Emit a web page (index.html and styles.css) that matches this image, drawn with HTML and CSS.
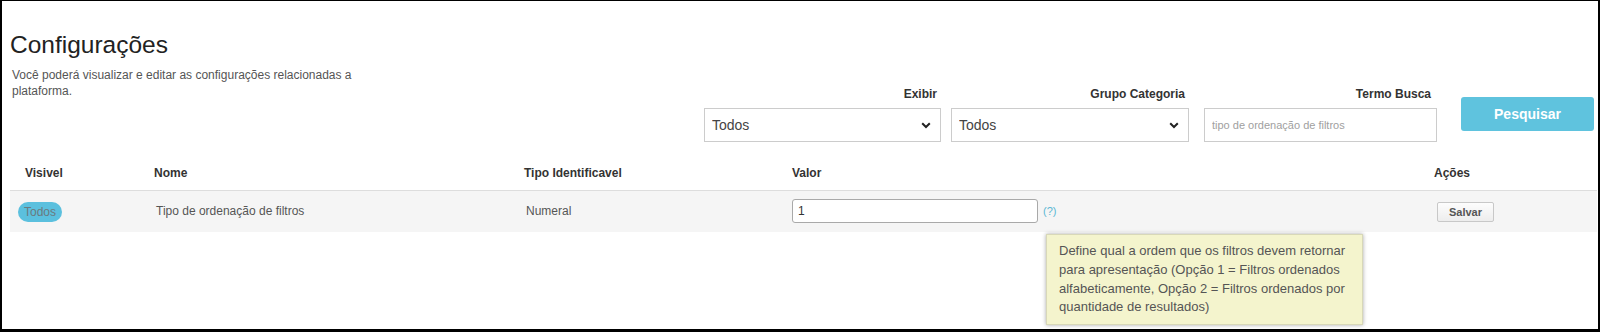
FILE: index.html
```html
<!DOCTYPE html>
<html lang="pt">
<head>
<meta charset="utf-8">
<title>Configurações</title>
<link rel="stylesheet" href="styles.css">
</head>
<body>
<div class="frame">
  <h1 class="title">Configurações</h1>
  <div class="toolbar">
    <p class="desc">Você poderá visualizar e editar as configurações relacionadas a plataforma.</p>
    <div class="filters">
      <div class="group g1">
        <label class="flabel">Exibir</label>
        <div class="select-wrap">
          <select class="select"><option>Todos</option></select>
          <svg class="chev" width="10" height="7" viewBox="0 0 10 7"><path d="M1.2 1.2 L5 5 L8.8 1.2" fill="none" stroke="#222" stroke-width="2"/></svg>
        </div>
      </div>
      <div class="group g2">
        <label class="flabel">Grupo Categoria</label>
        <div class="select-wrap">
          <select class="select"><option>Todos</option></select>
          <svg class="chev" width="10" height="7" viewBox="0 0 10 7"><path d="M1.2 1.2 L5 5 L8.8 1.2" fill="none" stroke="#222" stroke-width="2"/></svg>
        </div>
      </div>
      <div class="group g3">
        <label class="flabel">Termo Busca</label>
        <input class="search" type="text" placeholder="tipo de ordenação de filtros">
      </div>
      <button class="btn-search">Pesquisar</button>
    </div>
  </div>

  <table class="grid">
    <colgroup>
      <col class="c1"><col class="c2"><col class="c3"><col class="c4"><col class="c5">
    </colgroup>
    <thead>
      <tr>
        <th class="th-first">Visivel</th>
        <th>Nome</th>
        <th>Tipo Identificavel</th>
        <th>Valor</th>
        <th>Ações</th>
      </tr>
    </thead>
    <tbody>
      <tr>
        <td><span class="badge">Todos</span></td>
        <td class="txt">Tipo de ordenação de filtros</td>
        <td class="txt">Numeral</td>
        <td class="val">
          <div class="val-wrap">
            <input class="val-input" type="text" value="1">
            <span class="help">(?)</span>
            <div class="tip">Define qual a ordem que os filtros devem retornar para apresentação (Opção 1 = Filtros ordenados alfabeticamente, Opção 2 = Filtros ordenados por quantidade de resultados)</div>
          </div>
        </td>
        <td class="act"><button class="btn-save">Salvar</button></td>
      </tr>
    </tbody>
  </table>
</div>
</body>
</html>
```

FILE: styles.css
```css
* { box-sizing: border-box; }
html, body { margin: 0; padding: 0; background: #fff; }
body { font-family: "Liberation Sans", Arial, sans-serif; color: #333; }

.frame {
  width: 1600px;
  height: 332px;
  border-style: solid;
  border-color: #000;
  border-width: 1px 2px 3px 2px;
  padding: 0 4px 0 8px;
  overflow: hidden;
}

.title {
  margin: 31px 0 0 0;
  font-size: 24.5px;
  font-weight: normal;
  line-height: 25px;
  color: #222;
}

.toolbar {
  display: flex;
  align-items: flex-start;
  margin-top: 10px;
}

.desc {
  margin: 0 0 0 2px;
  width: 345px;
  font-size: 12px;
  line-height: 16px;
  color: #555;
}

.filters {
  margin-left: auto;
  display: flex;
  align-items: flex-start;
  padding-top: 19px;
}

.group { display: flex; flex-direction: column; }
.g1 { width: 237px; margin-right: 10px; }
.g2 { width: 238px; margin-right: 15px; }
.g3 { width: 233px; margin-right: 24px; }

.flabel {
  display: block;
  text-align: right;
  font-size: 12px;
  line-height: 16px;
  font-weight: bold;
  color: #333;
  padding-right: 4px;
  margin-bottom: 6px;
}
.g3 .flabel { padding-right: 6px; }

.select-wrap { position: relative; height: 34px; }
.select {
  -webkit-appearance: none;
  appearance: none;
  width: 100%;
  height: 34px;
  border: 1px solid #ccc;
  border-radius: 0;
  background: #fff;
  font-family: "Liberation Sans", Arial, sans-serif;
  font-size: 14px;
  color: #444;
  padding: 0 0 0 7px;
  outline: none;
}
.chev { position: absolute; right: 10px; top: 14px; pointer-events: none; }

.search {
  width: 100%;
  height: 34px;
  border: 1px solid #ccc;
  border-radius: 0;
  padding: 0 7px;
  font-family: "Liberation Sans", Arial, sans-serif;
  font-size: 11px;
  color: #333;
  outline: none;
}
.search::placeholder { color: #a0a0a0; }

.btn-search {
  width: 133px;
  height: 34px;
  margin-top: 11px;
  background: #5fc3de;
  border: none;
  border-radius: 3px;
  color: #fff;
  font-family: "Liberation Sans", Arial, sans-serif;
  font-size: 14px;
  font-weight: bold;
}

.grid {
  margin-top: 15px;
  width: 1587px;
  border-collapse: collapse;
  table-layout: fixed;
  font-size: 12px;
}
.c1 { width: 136px; }
.c2 { width: 370px; }
.c3 { width: 268px; }
.c4 { width: 642px; }
.c5 { width: 171px; }

.grid th {
  text-align: left;
  font-weight: bold;
  color: #333;
  line-height: 16px;
  padding: 8px 8px 9px 8px;
  border-bottom: 1px solid #ddd;
}
.grid th.th-first { padding-left: 15px; }

.grid tbody tr { background: #f5f5f5; }
.grid td {
  padding: 8px 8px 8px 8px;
  line-height: 24px;
  height: 41px;
  vertical-align: middle;
  color: #555;
}
.grid td.txt { padding-left: 10px; }
.grid td.act { padding-left: 11px; }

.badge {
  display: inline-block;
  height: 20px;
  line-height: 20px;
  padding: 0 6px;
  border-radius: 10px;
  background: #5bc0de;
  color: #6a7a80;
  font-size: 12px;
  vertical-align: middle;
}

.val-wrap { position: relative; display: flex; align-items: center; }
.val-input {
  width: 246px;
  height: 24px;
  border: 1px solid #a9a9a9;
  border-radius: 3px;
  padding: 0 5px;
  font-family: "Liberation Sans", Arial, sans-serif;
  font-size: 12px;
  color: #333;
  background: #fff;
  outline: none;
}
.help {
  margin-left: 5px;
  color: #5bb8d4;
  font-size: 11px;
}

.tip {
  position: absolute;
  left: 254px;
  top: 35px;
  width: 317px;
  height: 91px;
  padding: 7px 4px 0 12px;
  background: #f4f4cd;
  border: 1px solid #d8d8b8;
  box-shadow: 0 0 4px rgba(0,0,0,0.35);
  font-size: 13px;
  line-height: 18.7px;
  color: #555;
  z-index: 2;
}

.btn-save {
  width: 57px;
  height: 20px;
  padding: 0;
  border: 1px solid #c8c8c8;
  border-radius: 2px;
  background: linear-gradient(#fdfdfd, #ededed);
  font-family: "Liberation Sans", Arial, sans-serif;
  font-size: 11px;
  font-weight: bold;
  color: #555;
  vertical-align: middle;
}
```
